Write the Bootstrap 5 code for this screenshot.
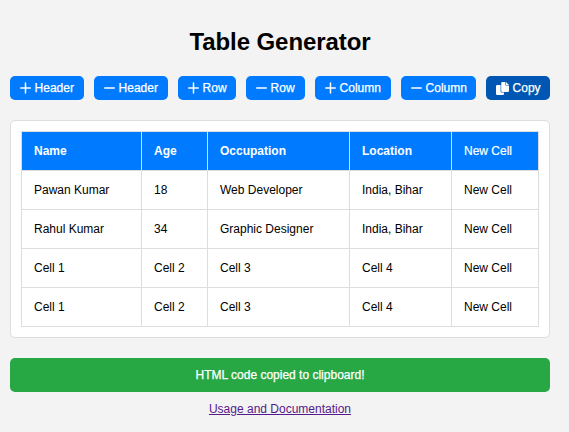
<!DOCTYPE html>
<html lang="en">
<head>
<meta charset="utf-8">
<meta name="viewport" content="width=device-width, initial-scale=1">
<title>Table Generator</title>
<link href="https://cdn.jsdelivr.net/npm/bootstrap@5.3.0/dist/css/bootstrap.min.css" rel="stylesheet">
<style>
body{background:#f3f3f3;color:#000;font:12px/14px "Liberation Sans",Arial,sans-serif;overflow:hidden}
.page{width:540px;margin-left:10px;padding-top:27px}
h1{font-size:24px;font-weight:700;line-height:29px;margin-bottom:20px;letter-spacing:-.07px}
.tools{gap:10px;margin-bottom:20px}
.tool{--bs-btn-padding-x:10px;--bs-btn-padding-y:0;--bs-btn-font-size:12px;--bs-btn-border-radius:5px;--bs-btn-bg:#007bff;--bs-btn-border-width:0;height:24px;line-height:24px;white-space:nowrap;-webkit-text-stroke:.25px #fff}
.tool svg{flex:none;width:11px;height:12px;margin-right:3.6px}
.tool.active{--bs-btn-active-bg:#0056b3}
.tool.active svg{width:13px;height:13px}
.w-a{width:74px}.w-b{width:58px}.w-c{width:59px}.w-d{width:76px}.w-e{width:75px}.w-f{width:64px}
.panel{border:1px solid #ddd;border-radius:5px;padding:10px;height:218px}
.grid-table{width:517px;table-layout:fixed;border-collapse:collapse}
.grid-table td,.grid-table th{border:1px solid #ddd;padding:12px;height:39px;line-height:14px}
.grid-table thead tr{background:#007bff;color:#fff}
.grid-table thead td{-webkit-text-stroke:.2px #fff}
.notice{background:#28a745;border-radius:5px;height:34px;line-height:34px;margin-top:20px;-webkit-text-stroke:.25px #fff}
.docs-line{margin-top:10px}
.docs{color:#551a8b}
</style>
</head>
<body>
<main class="page">
<h1 class="text-center">Table Generator</h1>
<div class="tools d-flex">
<button class="tool btn btn-primary d-flex align-items-center w-a"><svg viewBox="0 0 11 12"><path d="M5.5 1v10M.7 6h9.6" stroke="#fff" stroke-width="1.5" stroke-linecap="round"/></svg><span>Header</span></button>
<button class="tool btn btn-primary d-flex align-items-center w-a"><svg viewBox="0 0 11 12"><path d="M.7 6h9.6" stroke="#fff" stroke-width="1.5" stroke-linecap="round"/></svg><span>Header</span></button>
<button class="tool btn btn-primary d-flex align-items-center w-b"><svg viewBox="0 0 11 12"><path d="M5.5 1v10M.7 6h9.6" stroke="#fff" stroke-width="1.5" stroke-linecap="round"/></svg><span>Row</span></button>
<button class="tool btn btn-primary d-flex align-items-center w-c"><svg viewBox="0 0 11 12"><path d="M.7 6h9.6" stroke="#fff" stroke-width="1.5" stroke-linecap="round"/></svg><span>Row</span></button>
<button class="tool btn btn-primary d-flex align-items-center w-d"><svg viewBox="0 0 11 12"><path d="M5.5 1v10M.7 6h9.6" stroke="#fff" stroke-width="1.5" stroke-linecap="round"/></svg><span>Column</span></button>
<button class="tool btn btn-primary d-flex align-items-center w-e"><svg viewBox="0 0 11 12"><path d="M.7 6h9.6" stroke="#fff" stroke-width="1.5" stroke-linecap="round"/></svg><span>Column</span></button>
<button class="tool btn btn-primary active d-flex align-items-center w-f"><svg viewBox="0 0 13 13"><path fill="#fff" d="M1.2 3H4.6V9.3q0 1.2 1.2 1.2H8v1.3q0 1.2-1.2 1.2H1.2Q0 13 0 11.8V4.2Q0 3 1.2 3Z"/><path fill="#fff" d="M6.4 0H9.3V2.4q0 1.1 1.1 1.1H13V8.8q0 1.2-1.2 1.2H6.4Q5.2 10 5.2 8.8V1.2Q5.2 0 6.4 0Z"/><path fill="#fff" d="M9.9 0 13 3H10.5Q9.9 3 9.9 2.4Z"/></svg><span>Copy</span></button>
</div>
<section class="panel bg-white">
<table class="grid-table">
<colgroup><col style="width:120px"><col style="width:66px"><col style="width:142px"><col style="width:102px"><col style="width:87px"></colgroup>
<thead><tr><th>Name</th><th>Age</th><th>Occupation</th><th>Location</th><td>New Cell</td></tr></thead>
<tbody>
<tr><td>Pawan Kumar</td><td>18</td><td>Web Developer</td><td>India, Bihar</td><td>New Cell</td></tr>
<tr><td>Rahul Kumar</td><td>34</td><td>Graphic Designer</td><td>India, Bihar</td><td>New Cell</td></tr>
<tr><td>Cell 1</td><td>Cell 2</td><td>Cell 3</td><td>Cell 4</td><td>New Cell</td></tr>
<tr><td>Cell 1</td><td>Cell 2</td><td>Cell 3</td><td>Cell 4</td><td>New Cell</td></tr>
</tbody>
</table>
</section>
<div class="notice text-white text-center">HTML code copied to clipboard!</div>
<div class="docs-line text-center"><a class="docs" href="#">Usage and Documentation</a></div>
</main>
<script src="https://cdn.jsdelivr.net/npm/bootstrap@5.3.0/dist/js/bootstrap.bundle.min.js"></script>
</body>
</html>
